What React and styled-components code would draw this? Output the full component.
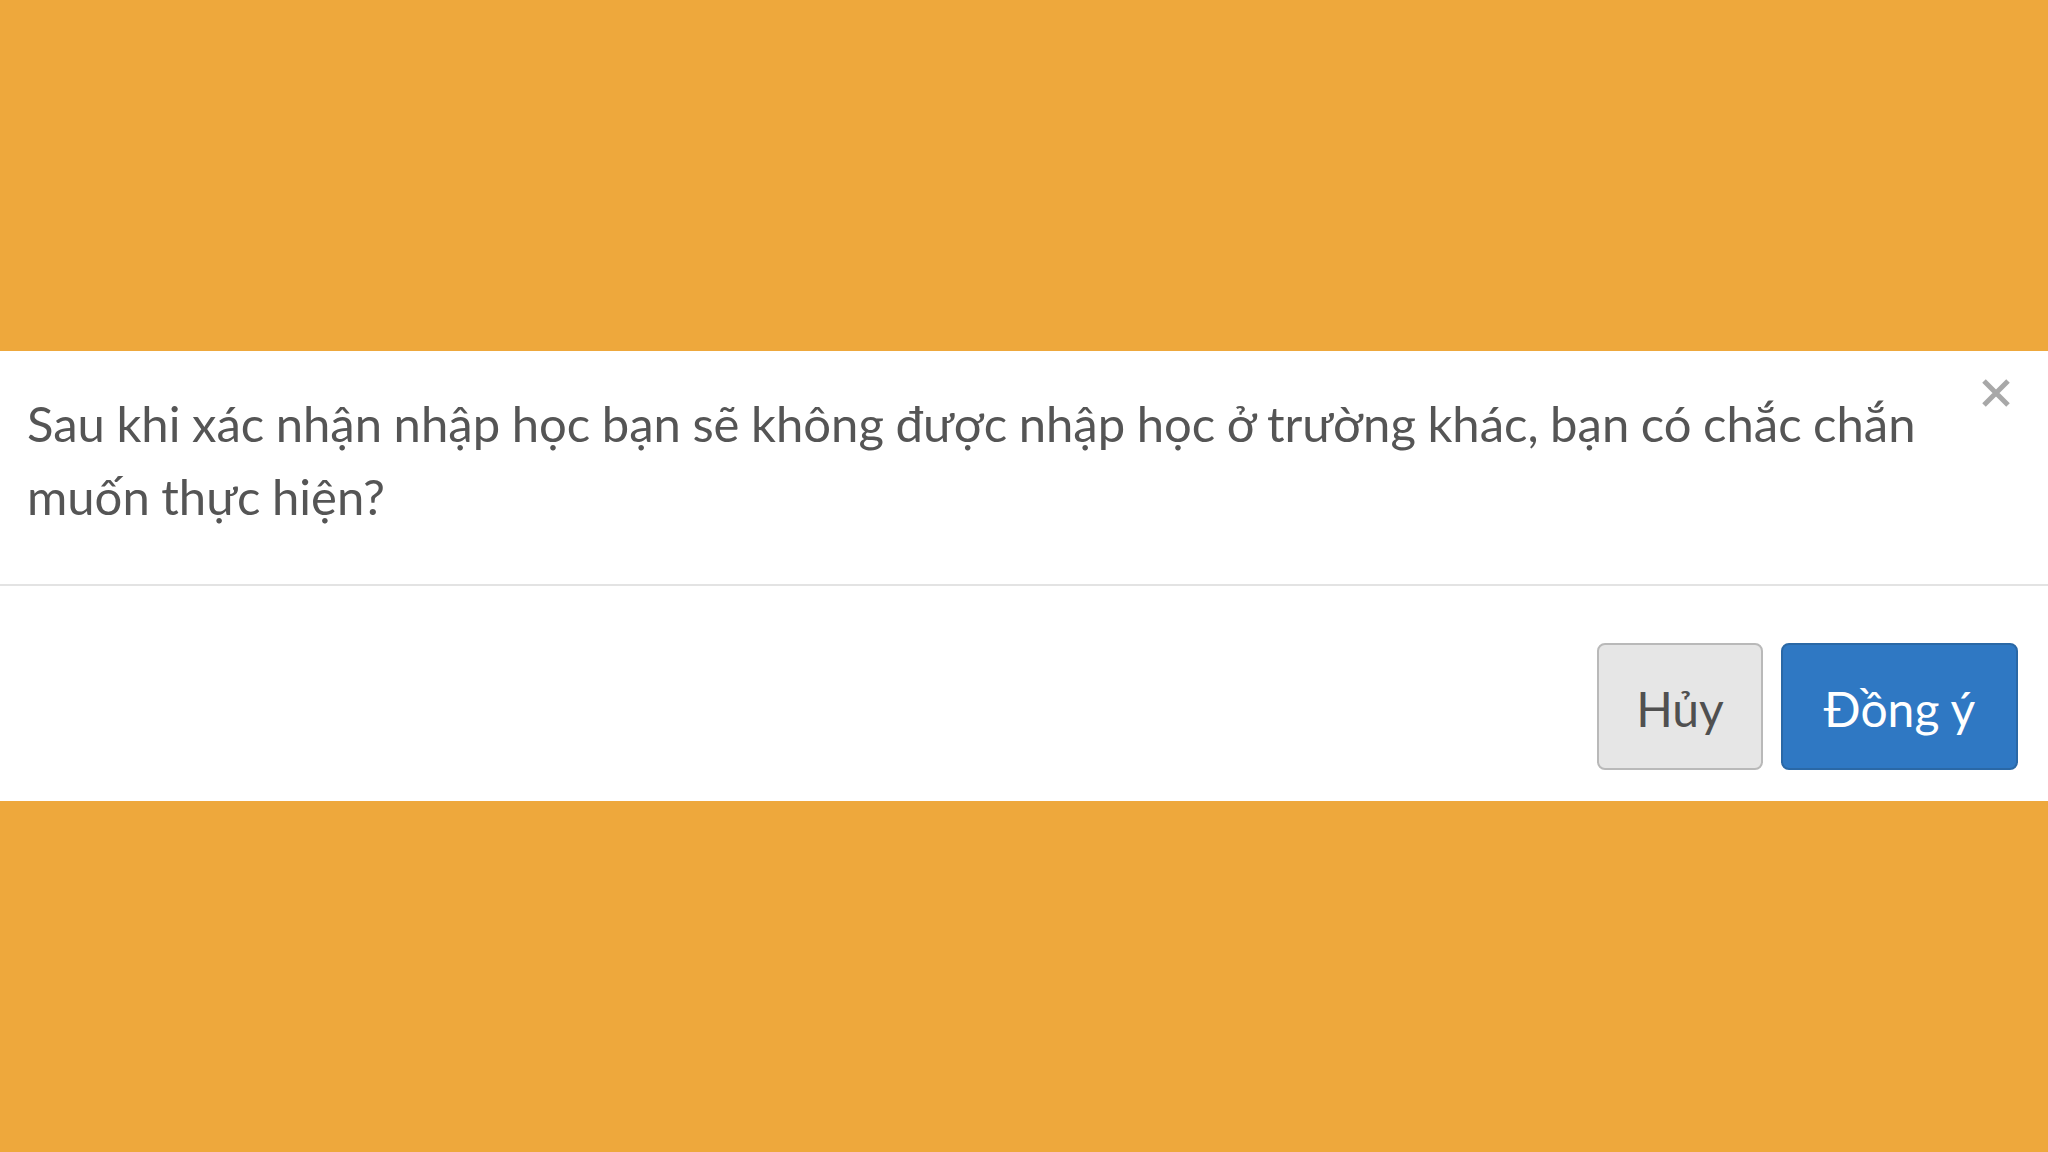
import React from 'react';
import styled, { createGlobalStyle } from 'styled-components';

const GlobalStyle = createGlobalStyle`
  html, body {
    margin: 0;
    padding: 0;
    background: #eea83c;
  }
  body {
    font-family: Lato, "Open Sans", sans-serif;
  }
`;

const Page = styled.div`
  width: 2048px;
  height: 1152px;
  background: #eea83c;
  display: flex;
  flex-direction: column;
  padding-top: 351px;
  box-sizing: border-box;
`;

const Dialog = styled.div`
  background: #ffffff;
  width: 100%;
  height: 450px;
  display: flex;
  flex-direction: column;
`;

const Body = styled.div`
  position: relative;
  padding: 36px 60px 0 27px;
  height: 235px;
  box-sizing: border-box;
  border-bottom: 2px solid #e3e3e3;
`;

const Message = styled.p`
  margin: 0;
  font-size: 49px;
  line-height: 73px;
  word-spacing: -1px;
  color: #555555;
`;

const Close = styled.button`
  position: absolute;
  top: 27px;
  right: 38px;
  border: none;
  background: none;
  padding: 0;
  width: 28px;
  height: 30px;
  cursor: pointer;
  display: flex;
`;

const Footer = styled.div`
  flex: 1;
  display: flex;
  justify-content: flex-end;
  align-items: flex-start;
  gap: 18px;
  padding: 57px 30px 0 0;
`;

const Button = styled.button`
  height: 127px;
  width: ${(p) => p.$w}px;
  border-radius: 8px;
  font-family: Lato, "Open Sans", sans-serif;
  font-size: 48px;
  padding: 4px 0 0;
  box-sizing: border-box;
  cursor: pointer;
  border: 2px solid ${(p) => (p.$primary ? '#2a68a6' : '#b9b9b9')};
  background: ${(p) => (p.$primary ? '#2f78c3' : '#e6e6e6')};
  color: ${(p) => (p.$primary ? '#ffffff' : '#505050')};
`;

export default function App() {
  return (
    <>
      <GlobalStyle />
      <Page>
        <Dialog>
          <Body>
            <Message>
              Sau khi xác nhận nhập học bạn sẽ không được nhập học ở trường khác, bạn có chắc chắn muốn thực hiện?
            </Message>
            <Close aria-label="Đóng">
              <svg width="28" height="30" viewBox="0 0 28 30">
                <path d="M2 3 L26 27 M26 3 L2 27" stroke="#a8a8a8" strokeWidth="5" />
              </svg>
            </Close>
          </Body>
          <Footer>
            <Button $w={166}>Hủy</Button>
            <Button $primary $w={237}>Đồng ý</Button>
          </Footer>
        </Dialog>
      </Page>
    </>
  );
}
